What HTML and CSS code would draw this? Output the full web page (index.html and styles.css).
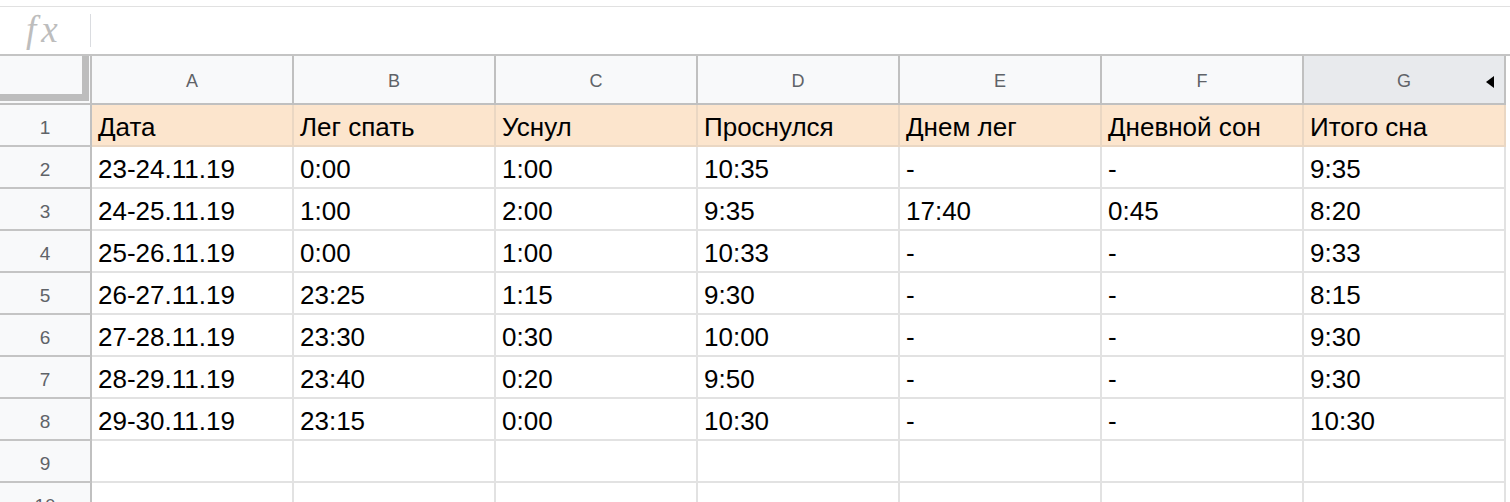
FILE: index.html
```html
<!DOCTYPE html>
<html lang="ru">
<head>
<meta charset="utf-8">
<link rel="stylesheet" href="styles.css">
</head>
<body>
<div class="formula-bar">
  <div class="fx">fx</div>
  <div class="fx-sep"></div>
  <div class="fx-input"></div>
</div>
<div class="sheet">
  <div class="corner"><div class="corner-bars"></div></div>
  <div class="col-head">A</div>
  <div class="col-head">B</div>
  <div class="col-head">C</div>
  <div class="col-head">D</div>
  <div class="col-head">E</div>
  <div class="col-head">F</div>
  <div class="col-head col-head-sel">G<span class="collapse-arrow"></span></div>

  <div class="row-head">1</div>
  <div class="cell hdr">Дата</div>
  <div class="cell hdr">Лег спать</div>
  <div class="cell hdr">Уснул</div>
  <div class="cell hdr">Проснулся</div>
  <div class="cell hdr">Днем лег</div>
  <div class="cell hdr">Дневной сон</div>
  <div class="cell hdr">Итого сна</div>

  <div class="row-head">2</div>
  <div class="cell">23-24.11.19</div><div class="cell">0:00</div><div class="cell">1:00</div><div class="cell">10:35</div><div class="cell">-</div><div class="cell">-</div><div class="cell">9:35</div>

  <div class="row-head">3</div>
  <div class="cell">24-25.11.19</div><div class="cell">1:00</div><div class="cell">2:00</div><div class="cell">9:35</div><div class="cell">17:40</div><div class="cell">0:45</div><div class="cell">8:20</div>

  <div class="row-head">4</div>
  <div class="cell">25-26.11.19</div><div class="cell">0:00</div><div class="cell">1:00</div><div class="cell">10:33</div><div class="cell">-</div><div class="cell">-</div><div class="cell">9:33</div>

  <div class="row-head">5</div>
  <div class="cell">26-27.11.19</div><div class="cell">23:25</div><div class="cell">1:15</div><div class="cell">9:30</div><div class="cell">-</div><div class="cell">-</div><div class="cell">8:15</div>

  <div class="row-head">6</div>
  <div class="cell">27-28.11.19</div><div class="cell">23:30</div><div class="cell">0:30</div><div class="cell">10:00</div><div class="cell">-</div><div class="cell">-</div><div class="cell">9:30</div>

  <div class="row-head">7</div>
  <div class="cell">28-29.11.19</div><div class="cell">23:40</div><div class="cell">0:20</div><div class="cell">9:50</div><div class="cell">-</div><div class="cell">-</div><div class="cell">9:30</div>

  <div class="row-head">8</div>
  <div class="cell">29-30.11.19</div><div class="cell">23:15</div><div class="cell">0:00</div><div class="cell">10:30</div><div class="cell">-</div><div class="cell">-</div><div class="cell">10:30</div>

  <div class="row-head">9</div>
  <div class="cell"></div><div class="cell"></div><div class="cell"></div><div class="cell"></div><div class="cell"></div><div class="cell"></div><div class="cell"></div>

  <div class="row-head">10</div>
  <div class="cell"></div><div class="cell"></div><div class="cell"></div><div class="cell"></div><div class="cell"></div><div class="cell"></div><div class="cell"></div>
</div>
</body>
</html>
```

FILE: styles.css
```css
html, body {
  margin: 0;
  padding: 0;
  background: #ffffff;
}
body {
  width: 1510px;
  height: 502px;
  overflow: hidden;
  font-family: "Liberation Sans", Arial, sans-serif;
}

.formula-bar {
  margin-top: 6px;
  height: 47px;
  border-top: 1px solid #e1e1e1;
  border-bottom: 2px solid #c4c4c4;
  display: flex;
  align-items: center;
}
.fx {
  width: 90px;
  display: flex;
  justify-content: flex-start;
  padding-left: 26px;
  padding-bottom: 2px;
  box-sizing: border-box;
  font-family: "Liberation Serif", "Times New Roman", serif;
  font-style: italic;
  font-size: 37px;
  letter-spacing: 5px;
  color: #bdbdbd;
  line-height: 1;
}
.fx-sep {
  width: 1px;
  height: 33px;
  background: #dadce0;
}
.fx-input {
  flex: 1;
}

.sheet {
  display: grid;
  grid-template-columns: 92px repeat(7, 202px);
  grid-template-rows: 49px repeat(10, 42px);
}

.corner {
  background: #f8f9fa;
  border-right: 2px solid #c0c0c0;
  border-bottom: 2px solid #c0c0c0;
  box-sizing: border-box;
}
.corner-bars {
  width: 89px;
  height: 45px;
  box-sizing: border-box;
  border-right: 7px solid #bdbdbd;
  border-bottom: 7px solid #bdbdbd;
}

.col-head {
  position: relative;
  background: #f8f9fa;
  border-right: 2px solid #c0c0c0;
  border-bottom: 2px solid #c0c0c0;
  box-sizing: border-box;
  display: flex;
  align-items: center;
  justify-content: center;
  padding-top: 4px;
  font-size: 18px;
  color: #5f6368;
}
.col-head-sel {
  background: #e8eaed;
}
.collapse-arrow {
  position: absolute;
  right: 10px;
  top: 20px;
  width: 0;
  height: 0;
  border-top: 6px solid transparent;
  border-bottom: 6px solid transparent;
  border-right: 8px solid #000000;
}

.row-head {
  background: #f8f9fa;
  border-right: 2px solid #c0c0c0;
  border-bottom: 2px solid #c4c4c4;
  box-sizing: border-box;
  display: flex;
  align-items: center;
  justify-content: center;
  padding-top: 5px;
  font-size: 19px;
  color: #5f6368;
}

.cell {
  background: #ffffff;
  border-right: 2px solid #e2e2e2;
  border-bottom: 2px solid #e2e2e2;
  box-sizing: border-box;
  display: flex;
  align-items: flex-end;
  padding: 0 0 3px 6px;
  font-size: 26px;
  line-height: 30px;
  color: #000000;
  white-space: nowrap;
  overflow: hidden;
}
.cell.hdr {
  background: #fce5cd;
  border-right-color: #ead7c3;
  border-bottom-color: #ead7c3;
}
```
